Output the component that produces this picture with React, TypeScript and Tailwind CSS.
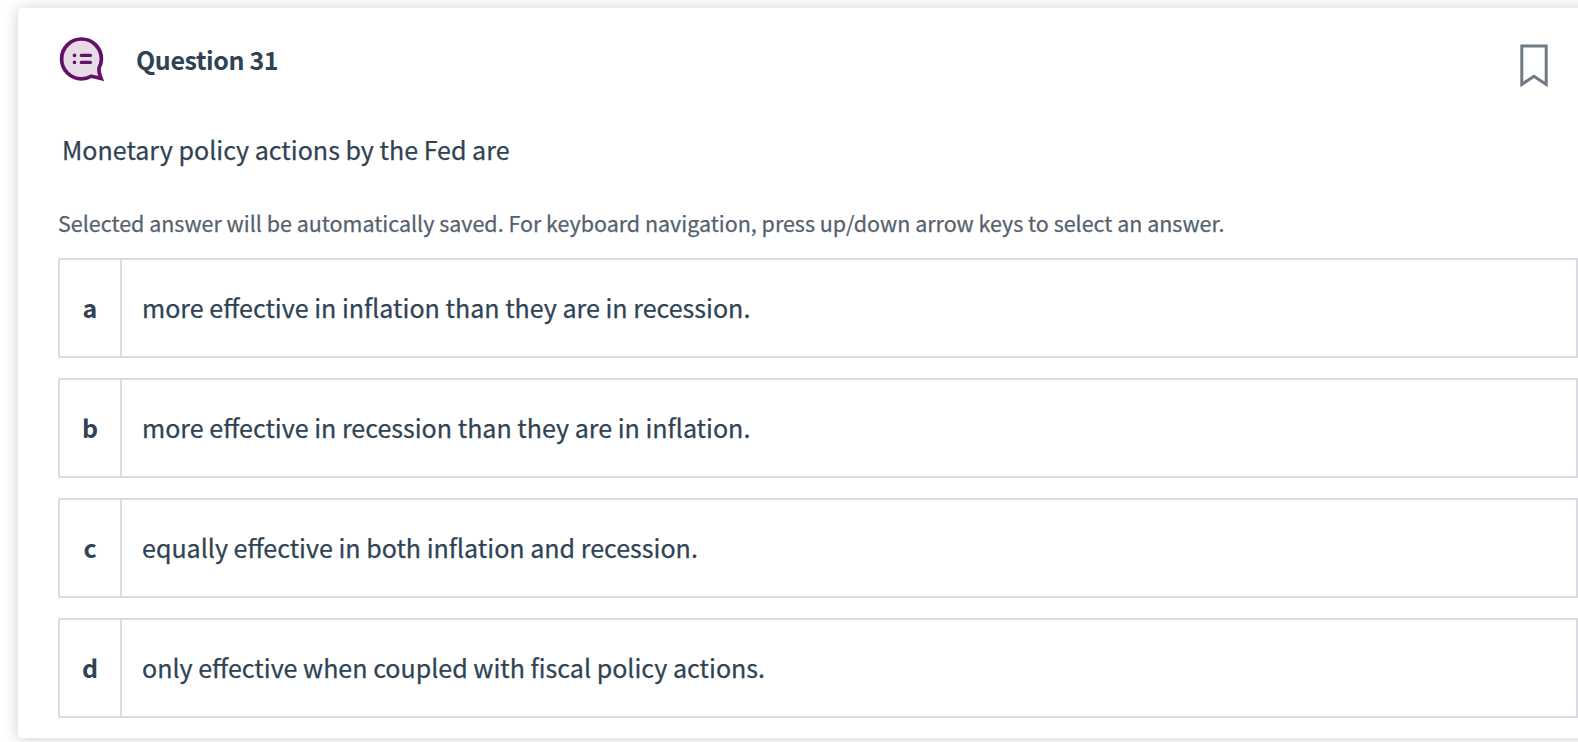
import React from 'react';

interface Answer {
  letter: string;
  text: string;
}

const answers: Answer[] = [
  { letter: 'a', text: 'more effective in inflation than they are in recession.' },
  { letter: 'b', text: 'more effective in recession than they are in inflation.' },
  { letter: 'c', text: 'equally effective in both inflation and recession.' },
  { letter: 'd', text: 'only effective when coupled with fiscal policy actions.' },
];

const QuestionIcon = () => (
  <svg className="w-12 h-12 shrink-0" viewBox="0 0 48 48" fill="none">
    <path d="M41 32.2C40.7 34.6 41.6 38.6 43.1 42.5C39.6 41.6 36.5 40.9 33 40.3C30 41.9 27 42.8 23.5 42.8A19.9 19.9 0 1 1 43.4 22.9C43.4 26.5 42.6 29.4 41 32.2Z" fill="#e7dbe7" stroke="#621166" strokeWidth="3.7" />
    <path d="M23.3 19.4h9.1M23.3 26.4h9.1" stroke="#621166" strokeWidth="3.3" strokeLinecap="round" />
    <circle cx="16.5" cy="19.4" r="1.8" fill="#621166" />
    <circle cx="16.5" cy="26.4" r="1.8" fill="#621166" />
  </svg>
);

const BookmarkIcon = () => (
  <svg className="w-7 h-11" viewBox="0 0 28 44" fill="none">
    <path d="M1.8 2H26.2V40.4L14 32.2L1.8 40.4Z" stroke="#6f7a84" strokeWidth="3" />
  </svg>
);

export default function App() {
  return (
    <div className="h-[742px] overflow-hidden bg-white pt-2 pl-[18px] font-['Noto_Sans_CJK_SC',sans-serif] text-[#2f4354] [-webkit-text-stroke:0.25px]">
      <main className="h-[730px] w-[1600px] rounded bg-white pl-10 shadow-[0_1px_15px_rgba(0,0,0,0.2)]">
        <div className="w-[1520px]">
          <header className="flex h-[104px] items-center">
            <QuestionIcon />
            <h1 className="ml-[30px] text-[25px] font-bold tracking-[-0.4px] [-webkit-text-stroke:0]">Question 31</h1>
            <button className="mt-3 mr-[30px] ml-auto" aria-label="Bookmark question">
              <BookmarkIcon />
            </button>
          </header>
          <p className="flex h-[76px] items-center pl-1 text-[25.05px]">Monetary policy actions by the Fed are</p>
          <p className="flex h-[70px] items-center text-[21.48px] text-[#56616d]">
            Selected answer will be automatically saved. For keyboard navigation, press up/down arrow keys to select an answer.
          </p>
          <ul className="flex flex-col gap-5">
            {answers.map((answer) => (
              <li key={answer.letter} className="flex h-[100px] border-2 border-[#d9dde2]">
                <span className="flex w-[62px] items-center justify-center border-r-2 border-[#d9dde2] text-[25px] font-bold [-webkit-text-stroke:0]">{answer.letter}</span>
                <span className="flex items-center pl-5 text-[25.05px]">{answer.text}</span>
              </li>
            ))}
          </ul>
        </div>
      </main>
    </div>
  );
}
